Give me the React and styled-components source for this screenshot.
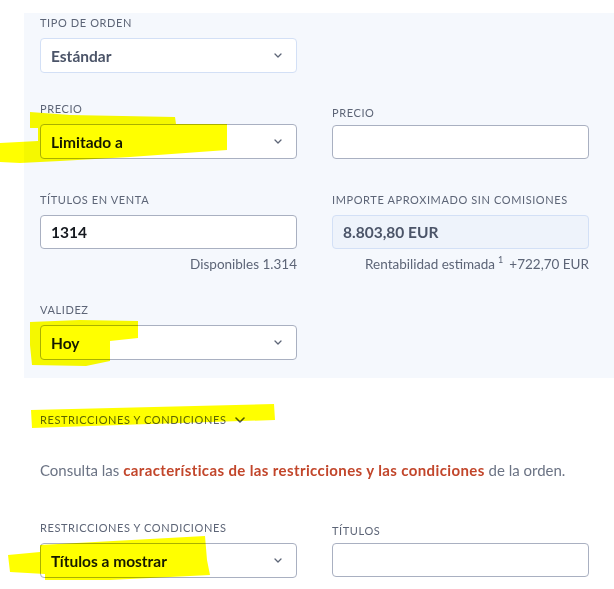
import React from "react";
import styled, { createGlobalStyle } from "styled-components";

const Global = createGlobalStyle`
  html, body {
    margin: 0;
    padding: 0;
    background: #ffffff;
    overflow: hidden;
  }
  body {
    font-family: Lato, "Noto Sans", "Liberation Sans", sans-serif;
    -webkit-font-smoothing: antialiased;
  }
`;

const Page = styled.div`
  position: relative;
  width: 614px;
  height: 589px;
  overflow: hidden;
  padding-top: 13px;
  box-sizing: border-box;
`;

const Panel = styled.section`
  margin-left: 24px;
  background: #f5f8fd;
  padding: 3px 25px 18px 16px;
  display: flex;
  flex-direction: column;
`;

const Row = styled.div`
  display: grid;
  grid-template-columns: 257px 257px;
  column-gap: 35px;
  margin-top: ${(p) => p.$mt || 0}px;
`;

const Field = styled.div`
  display: flex;
  flex-direction: column;
`;

const Label = styled.label`
  display: block;
  font-size: 11px;
  line-height: 14px;
  letter-spacing: 0.6px;
  text-transform: uppercase;
  color: #5d6577;
  margin-top: ${(p) => p.$shift || 0}px;
  margin-bottom: ${(p) => (p.$gap != null ? p.$gap : 8)}px;
  white-space: nowrap;
`;

const Box = styled.div`
  box-sizing: border-box;
  height: ${(p) => p.$h || 35}px;
  border: 1px solid ${(p) => (p.$soft ? "#d3e0f6" : "#a9b0c1")};
  border-radius: 4px;
  background: ${(p) => (p.$readonly ? "#eef3fb" : "#ffffff")};
  display: flex;
  align-items: center;
  justify-content: space-between;
  padding: 0 14px 0 10px;
  font-size: 15.5px;
  font-weight: 700;
  color: ${(p) => (p.$muted ? "#4b5468" : "#15191f")};
`;

const Helper = styled.div`
  margin-top: 7px;
  font-size: 13.5px;
  line-height: 16px;
  color: #5d6577;
  text-align: right;
  white-space: nowrap;
`;

const Sup = styled.sup`
  font-size: 9px;
  vertical-align: 6px;
  line-height: 0;
  margin: 0 6px 0 3px;
`;

const Section = styled.section`
  padding-left: 40px;
  display: flex;
  flex-direction: column;
`;

const Toggle = styled.button`
  all: unset;
  margin-top: 35px;
  display: inline-flex;
  align-items: center;
  gap: 9px;
  font-size: 11px;
  line-height: 14px;
  letter-spacing: 0.6px;
  color: #5d6577;
  cursor: pointer;
  align-self: flex-start;
`;

const Note = styled.p`
  margin: 33px 0 0;
  font-size: 15px;
  line-height: 20px;
  color: #6b7384;
  white-space: nowrap;
`;

const Link = styled.a`
  color: #c2462b;
  font-weight: 700;
  letter-spacing: 0.38px;
  text-decoration: none;
`;

const BottomRow = styled(Row)`
  margin-top: 41px;
`;

const Marker = styled.svg`
  position: absolute;
  left: 0;
  top: 0;
  pointer-events: none;
  mix-blend-mode: multiply;
`;

const Chevron = ({ color = "#5d6577", w = 6, h = 3, sw = 1.3 }) => (
  <svg width={w + 2} height={h + 2} viewBox={`-1 -1 ${w + 2} ${h + 2}`}>
    <path
      d={`M0 0 L${w / 2} ${h} L${w} 0`}
      fill="none"
      stroke={color}
      strokeWidth={sw}
      strokeLinecap="round"
      strokeLinejoin="round"
    />
  </svg>
);

const Select = ({ value, soft }) => (
  <Box $soft={soft} $muted={soft}>
    <span>{value}</span>
    <Chevron />
  </Box>
);

export default function App() {
  return (
    <>
      <Global />
      <Page>
        <Panel>
          <Row>
            <Field>
              <Label>Tipo de orden</Label>
              <Select value="Estándar" soft />
            </Field>
          </Row>

          <Row $mt={29}>
            <Field>
              <Label>Precio</Label>
              <Select value="Limitado a" />
            </Field>
            <Field>
              <Label $shift={4} $gap={5}>Precio</Label>
              <Box $h={34} />
            </Field>
          </Row>

          <Row $mt={34}>
            <Field>
              <Label>Títulos en venta</Label>
              <Box $h={34}>1314</Box>
              <Helper>Disponibles 1.314</Helper>
            </Field>
            <Field>
              <Label>Importe aproximado sin comisiones</Label>
              <Box $h={34} $soft $readonly $muted>
                8.803,80 EUR
              </Box>
              <Helper>
                Rentabilidad estimada<Sup>1</Sup>+722,70 EUR
              </Helper>
            </Field>
          </Row>

          <Row $mt={31}>
            <Field>
              <Label>Validez</Label>
              <Select value="Hoy" />
            </Field>
          </Row>
        </Panel>

        <Section>
          <Toggle>
            RESTRICCIONES Y CONDICIONES
            <Chevron color="#4b5468" w={8} h={4} sw={1.6} />
          </Toggle>
          <Note>
            Consulta las{" "}
            <Link href="#">
              características de las restricciones y las condiciones
            </Link>{" "}
            de la orden.
          </Note>
          <BottomRow>
            <Field>
              <Label>Restricciones y condiciones</Label>
              <Select value="Títulos a mostrar" />
            </Field>
            <Field>
              <Label $shift={3} $gap={5}>Títulos</Label>
              <Box $h={34} />
            </Field>
          </BottomRow>
        </Section>

        <Marker width="614" height="589" viewBox="0 0 614 589">
          <g fill="#ffff00">
            <polygon points="30,112 70,115 175,117 176,124 227,124 227,150 130,157 60,161 20,163 0,162 0,143 38,141 38,128 30,128" />
            <polygon points="30,322 80,320 138,321 138,338 110,341 110,361 86,366 32,365 30,345" />
            <polygon points="31,410 274,404 275,420 150,424 32,428" />
            <polygon points="40,545 205,536 207,560 210,575 110,580 45,580 45,574 10,572 8,555 40,552" />
          </g>
        </Marker>
      </Page>
    </>
  );
}
